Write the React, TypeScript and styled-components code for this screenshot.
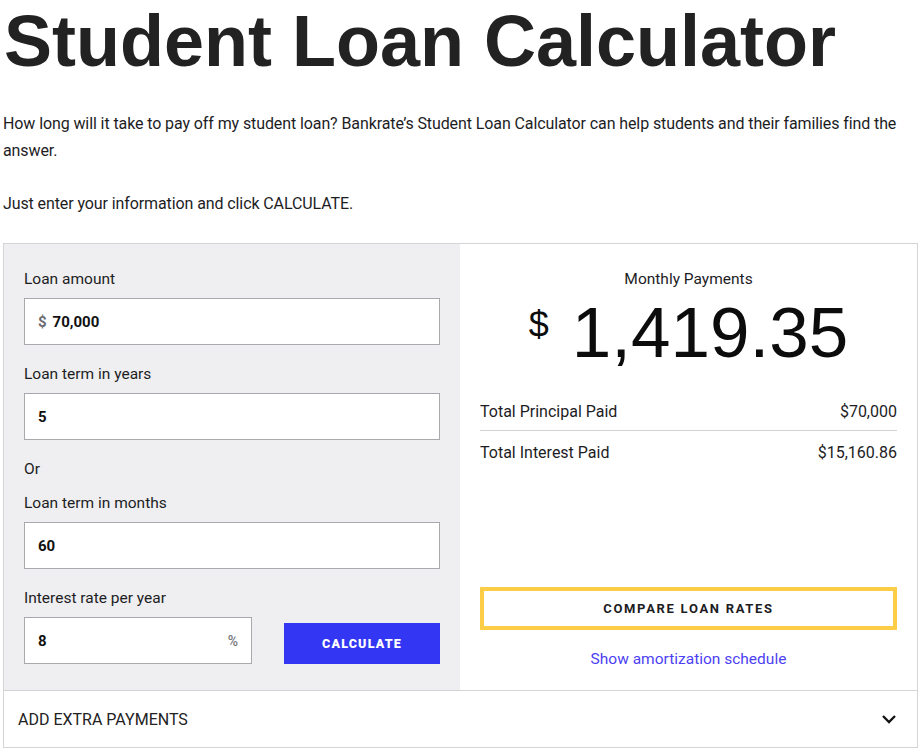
import React from 'react';
import styled, { createGlobalStyle } from 'styled-components';

const GlobalStyle = createGlobalStyle`
  body {
    margin: 0;
    background: #fff;
    color: #1d1d1f;
    font-family: Roboto, 'Liberation Sans', sans-serif;
  }
`;

const Page = styled.div`
  display: flex;
  flex-direction: column;
  padding: 0 6px 0 3px;
`;

const Title = styled.h1`
  margin: 5px 0 33px 1px;
  font-family: 'Liberation Sans', Arial, sans-serif;
  font-weight: 700;
  font-size: 72px;
  line-height: 1;
  color: #222;
`;

const Intro = styled.p`
  margin: 0 0 26px;
  font-size: 16px;
  line-height: 27px;
  letter-spacing: -0.1px;
`;

const Calculator = styled.section`
  border: 1px solid #d4d4d6;
  display: grid;
  grid-template-columns: 456px 1fr;
`;

const Inputs = styled.div`
  background: #efeff1;
  padding: 25px 20px 26px;
  display: flex;
  flex-direction: column;
`;

const Field = styled.div<{ gap?: number }>`
  display: flex;
  flex-direction: column;
  margin-bottom: ${(p) => (p.gap ?? 19)}px;
`;

const Label = styled.div`
  font-size: 15.5px;
  line-height: 20px;
  margin-bottom: 9px;
`;

const Or = styled.div`
  font-size: 15.5px;
  line-height: 20px;
  margin-bottom: 14px;
`;

const InputBox = styled.div<{ width?: number }>`
  display: flex;
  align-items: center;
  height: 47px;
  box-sizing: border-box;
  width: ${(p) => (p.width ? `${p.width}px` : '100%')};
  background: #fff;
  border: 1px solid #a9a9ad;
  padding: 0 13px;
  font-size: 15px;
  font-weight: 700;
  color: #111;
`;

const Prefix = styled.span`
  color: #6b6b70;
  margin-right: 6px;
`;

const Suffix = styled.span`
  margin-left: auto;
  color: #77777c;
  font-weight: 500;
  font-size: 14px;
`;

const LastRow = styled.div`
  display: flex;
  justify-content: space-between;
  align-items: flex-end;
`;

const CalcButton = styled.button`
  width: 156px;
  height: 41px;
  border: none;
  background: #3336f2;
  color: #fff;
  font-family: Roboto, sans-serif;
  font-weight: 900;
  font-size: 12.5px;
  letter-spacing: 1.2px;
  cursor: pointer;
`;

const Results = styled.div`
  padding: 25px 20px 21px;
  display: flex;
  flex-direction: column;
`;

const Heading = styled.div`
  text-align: center;
  font-size: 15.5px;
  line-height: 20px;
`;

const Amount = styled.div`
  display: flex;
  justify-content: center;
  align-items: flex-start;
  gap: 23px;
  margin: 8px 0 24px;
  font-family: 'Liberation Sans', Arial, sans-serif;
  color: #0c0c0c;
`;

const Currency = styled.span`
  font-size: 36px;
  line-height: 1;
  margin-top: 10px;
`;

const Figure = styled.span`
  font-size: 71px;
  line-height: 1;
`;

const Row = styled.div<{ divided?: boolean }>`
  display: flex;
  justify-content: space-between;
  font-size: 16px;
  line-height: 20px;
  padding: ${(p) => (p.divided ? '10px 0 8px' : '12px 0 10px')};
  border-bottom: ${(p) => (p.divided ? '1px solid #d2d2d4' : 'none')};
`;

const CompareButton = styled.button`
  margin-top: auto;
  height: 43px;
  border: 4px solid #fccd46;
  background: #fff;
  color: #1d1d1f;
  font-family: Roboto, sans-serif;
  font-weight: 700;
  font-size: 13px;
  letter-spacing: 1.7px;
  cursor: pointer;
`;

const ScheduleLink = styled.a`
  margin-top: 19px;
  text-align: center;
  font-size: 15.5px;
  line-height: 20px;
  color: #4d3ff2;
  text-decoration: none;
`;

const Extra = styled.div`
  grid-column: 1 / -1;
  display: flex;
  align-items: center;
  justify-content: space-between;
  height: 56px;
  padding: 0 20px 0 14px;
  border-top: 1px solid #d4d4d6;
  font-size: 16px;
  color: #222;
`;

function ChevronDown() {
  return (
    <svg width="16" height="10" viewBox="0 0 16 10">
      <polyline points="2,2 8,8 14,2" fill="none" stroke="#111" strokeWidth="2.3" />
    </svg>
  );
}

export default function App() {
  return (
    <Page>
      <GlobalStyle />
      <Title>Student Loan Calculator</Title>
      <Intro>
        How long will it take to pay off my student loan? Bankrate’s Student Loan Calculator can help
        students and their families find the answer.
      </Intro>
      <Intro>Just enter your information and click CALCULATE.</Intro>

      <Calculator>
        <Inputs>
          <Field>
            <Label>Loan amount</Label>
            <InputBox>
              <Prefix>$</Prefix>70,000
            </InputBox>
          </Field>
          <Field>
            <Label>Loan term in years</Label>
            <InputBox>5</InputBox>
          </Field>
          <Or>Or</Or>
          <Field>
            <Label>Loan term in months</Label>
            <InputBox>60</InputBox>
          </Field>
          <Field gap={0}>
            <Label>Interest rate per year</Label>
            <LastRow>
              <InputBox width={228}>
                8<Suffix>%</Suffix>
              </InputBox>
              <CalcButton>CALCULATE</CalcButton>
            </LastRow>
          </Field>
        </Inputs>

        <Results>
          <Heading>Monthly Payments</Heading>
          <Amount>
            <Currency>$</Currency>
            <Figure>1,419.35</Figure>
          </Amount>
          <Row divided>
            <span>Total Principal Paid</span>
            <span>$70,000</span>
          </Row>
          <Row>
            <span>Total Interest Paid</span>
            <span>$15,160.86</span>
          </Row>
          <CompareButton>COMPARE LOAN RATES</CompareButton>
          <ScheduleLink href="#">Show amortization schedule</ScheduleLink>
        </Results>

        <Extra>
          <span>ADD EXTRA PAYMENTS</span>
          <ChevronDown />
        </Extra>
      </Calculator>
    </Page>
  );
}
